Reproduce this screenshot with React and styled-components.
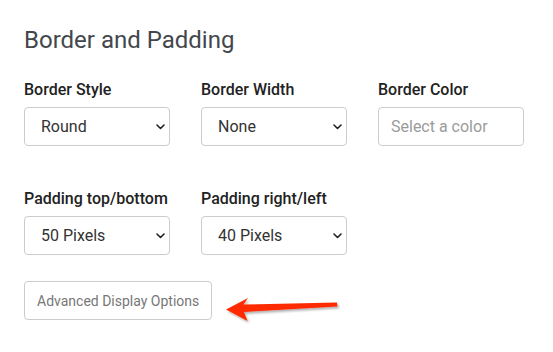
import React from "react";
import styled, { createGlobalStyle } from "styled-components";

const Global = createGlobalStyle`
  html, body { margin: 0; padding: 0; background: #fff; }
  body { font-family: Roboto, "Liberation Sans", Arial, sans-serif; }
  * { box-sizing: border-box; }
`;

const Panel = styled.section`
  padding: 26px 24px 30px 24px;
  border-bottom: 1px solid #cfcfcf;
  width: 553px;
`;

const Title = styled.h2`
  margin: 0 0 27px 0;
  font-size: 24px;
  line-height: 28px;
  font-weight: 400;
  color: #43474c;
`;

const Grid = styled.div`
  display: grid;
  grid-template-columns: repeat(3, 146px);
  column-gap: 31px;
  row-gap: 44px;
`;

const Field = styled.div`
  display: flex;
  flex-direction: column;
`;

const Label = styled.label`
  font-size: 16px;
  line-height: 18px;
  font-weight: 500;
  color: #222;
  margin-bottom: 8px;
  white-space: nowrap;
`;

const SelectWrap = styled.div`
  position: relative;
  width: 146px;
  height: 39px;
`;

const Select = styled.select`
  appearance: none;
  -webkit-appearance: none;
  width: 100%;
  height: 100%;
  border: 1px solid #cccccc;
  border-radius: 4px;
  background: #fff;
  padding: 0 24px 0 16px;
  font-family: Roboto, "Liberation Sans", Arial, sans-serif;
  font-size: 16px;
  color: #333;
  outline: none;
`;

const Chevron = styled.svg`
  position: absolute;
  right: 5px;
  top: 17px;
  width: 9px;
  height: 6px;
  pointer-events: none;
`;

const Input = styled.input`
  width: 146px;
  height: 39px;
  border: 1px solid #cccccc;
  border-radius: 4px;
  padding: 0 12px;
  font-family: Roboto, "Liberation Sans", Arial, sans-serif;
  font-size: 16px;
  color: #333;
  outline: none;
  &::placeholder { color: #9b9b9b; }
`;

const ActionRow = styled.div`
  display: flex;
  align-items: flex-start;
  margin-top: 26px;
`;

const Button = styled.button`
  width: 188px;
  height: 39px;
  border: 1px solid #cccccc;
  border-radius: 4px;
  background: #fff;
  font-family: Roboto, "Liberation Sans", Arial, sans-serif;
  font-size: 14px;
  color: #777;
  padding: 0 0 0 12px;
  text-align: left;
  white-space: nowrap;
`;

const Arrow = styled.svg`
  margin-left: 10px;
  margin-top: 14px;
  width: 124px;
  height: 34px;
  overflow: visible;
`;

function SelectField({ label, value, options }) {
  return (
    <Field>
      <Label>{label}</Label>
      <SelectWrap>
        <Select defaultValue={value}>
          {options.map((o) => (
            <option key={o}>{o}</option>
          ))}
        </Select>
        <Chevron viewBox="0 0 9 6">
          <path d="M1 1 L4.5 4.5 L8 1" fill="none" stroke="#222" strokeWidth="1.6" strokeLinecap="round" strokeLinejoin="round" />
        </Chevron>
      </SelectWrap>
    </Field>
  );
}

export default function App() {
  return (
    <>
      <Global />
      <Panel>
        <Title>Border and Padding</Title>
        <Grid>
          <SelectField label="Border Style" value="Round" options={["Round", "Square", "None"]} />
          <SelectField label="Border Width" value="None" options={["None", "1 Pixel", "2 Pixels"]} />
          <Field>
            <Label>Border Color</Label>
            <Input placeholder="Select a color" />
          </Field>
          <SelectField label="Padding top/bottom" value="50 Pixels" options={["0 Pixels", "50 Pixels"]} />
          <SelectField label="Padding right/left" value="40 Pixels" options={["0 Pixels", "40 Pixels"]} />
        </Grid>
        <ActionRow>
          <Button>Advanced Display Options</Button>
          <Arrow viewBox="222 295 124 34">
            <defs>
              <filter id="sh" x="-10%" y="-30%" width="130%" height="180%">
                <feDropShadow dx="1.5" dy="2" stdDeviation="1.2" floodColor="#000" floodOpacity="0.3" />
              </filter>
            </defs>
            <polygon
              points="226,309.5 248,298 243.5,304.5 337,302.5 337.5,306.5 244,312 247.5,321"
              fill="#ff2a00"
              filter="url(#sh)"
              strokeLinejoin="round"
            />
          </Arrow>
        </ActionRow>
      </Panel>
    </>
  );
}
